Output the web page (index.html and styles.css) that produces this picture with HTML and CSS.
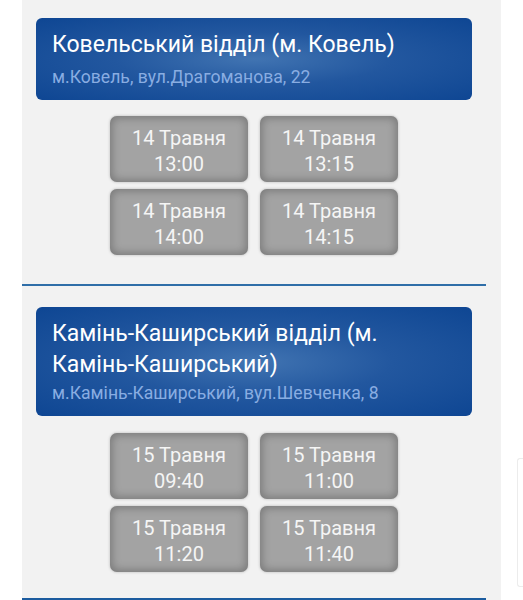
FILE: index.html
```html
<!DOCTYPE html>
<html lang="uk">
<head>
<meta charset="utf-8">
<link rel="stylesheet" href="styles.css">
</head>
<body>
<div class="page">
  <div class="panel">
    <section class="office first">
      <div class="office-head">
        <div class="office-title">Ковельський відділ (м. Ковель)</div>
        <div class="office-addr">м.Ковель, вул.Драгоманова, 22</div>
      </div>
      <div class="slots">
        <div class="slot">14 Травня<br>13:00</div>
        <div class="slot">14 Травня<br>13:15</div>
        <div class="slot">14 Травня<br>14:00</div>
        <div class="slot">14 Травня<br>14:15</div>
      </div>
    </section>
    <section class="office second">
      <div class="office-head">
        <div class="office-title">Камінь-Каширський відділ (м. <span class="nowrap">Камінь-Каширський)</span></div>
        <div class="office-addr">м.Камінь-Каширський, вул.Шевченка, 8</div>
      </div>
      <div class="slots">
        <div class="slot">15 Травня<br>09:40</div>
        <div class="slot">15 Травня<br>11:00</div>
        <div class="slot">15 Травня<br>11:20</div>
        <div class="slot">15 Травня<br>11:40</div>
      </div>
    </section>
  </div>
  <div class="side">
    <div class="side-box"></div>
  </div>
</div>
</body>
</html>
```
FILE: styles.css
```css
html, body {
  margin: 0;
  padding: 0;
  background: #ffffff;
  font-family: Roboto, "Noto Sans", "DejaVu Sans", sans-serif;
}
.page {
  display: flex;
  align-items: flex-start;
  padding-left: 22px;
  height: 600px;
  overflow: hidden;
}
.panel {
  width: 479px;
  flex: none;
  background: #f2f2f2;
  min-height: 620px;
  padding-right: 15px;
  box-sizing: border-box;
}
.office {
  border-bottom: 2px solid #2f6ea8;
}
.office.first {
  padding: 18px 0 29px;
}
.office.second {
  padding: 21px 0 26px;
  border-bottom: 3px solid #1c5c9f;
}
.office-head {
  margin: 0 14px;
  padding: 11px 16px 13px;
  border-radius: 6px;
  color: #ffffff;
  background: radial-gradient(ellipse at 50% 50%, #4174b2 0%, #22579f 45%, #0e4693 100%);
}
.office-title {
  font-size: 23px;
  line-height: 31px;
}
.nowrap {
  white-space: nowrap;
}
.office-addr {
  margin-top: 7px;
  font-size: 17.6px;
  line-height: 20px;
  color: #89ade2;
}
.second .office-addr {
  margin-top: 3px;
}
.slots {
  display: grid;
  grid-template-columns: 138px 138px;
  column-gap: 12px;
  row-gap: 7px;
  justify-content: center;
  margin-top: 16px;
}
.second .slots {
  margin-top: 17px;
}
.slot {
  height: 66px;
  box-sizing: border-box;
  padding-top: 9px;
  border-radius: 7px;
  background: #a3a3a3;
  box-shadow: inset 0 0 8px 2px rgba(0, 0, 0, 0.26), 0 0 3px rgba(0, 0, 0, 0.25);
  color: #f5f5f5;
  font-size: 20px;
  line-height: 26px;
  text-align: center;
}
.side {
  flex: 1;
  padding-left: 16px;
}
.side-box {
  margin-top: 458px;
  height: 127px;
  border: 1px solid #ececec;
  border-right: none;
  border-radius: 3px 0 0 3px;
}
```
